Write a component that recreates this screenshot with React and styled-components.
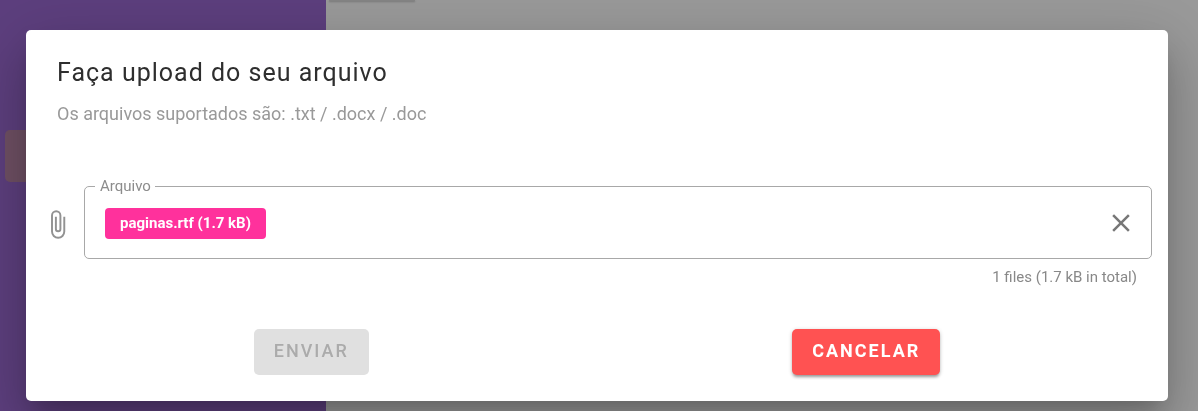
import React, { useState } from "react";
import styled, { createGlobalStyle } from "styled-components";

const GlobalStyle = createGlobalStyle`
  *, *::before, *::after { box-sizing: border-box; }
  body { margin: 0; font-family: Roboto, "Liberation Sans", sans-serif; }
`;

const Page = styled.div`
  display: flex;
  min-height: 100vh;
`;

const Sidebar = styled.nav`
  flex: 0 0 326px;
  padding: 130px 5px 0;
  background: #5d3f7e;
`;

const ActiveItem = styled.div`
  height: 52px;
  border-radius: 5px;
  background: #6f5064;
`;

const Main = styled.main`
  flex: 1;
  padding: 0 3px;
  background: #9a9a9a;
`;

const MainTab = styled.div`
  width: 86px;
  height: 1px;
  background: #858585;
  box-shadow: 0 1px 2px rgba(0, 0, 0, 0.3);
`;

const Overlay = styled.div`
  position: fixed;
  inset: 0;
  padding: 30px 30px 10px 26px;
`;

const Dialog = styled.section`
  display: flex;
  flex-direction: column;
  min-height: 100%;
  padding: 25px 16px 26px;
  border-radius: 5px;
  background: #fff;
  box-shadow:
    0 14px 20px -9px rgba(0, 0, 0, 0.2),
    0 31px 49px 4px rgba(0, 0, 0, 0.14),
    0 12px 60px 10px rgba(0, 0, 0, 0.12);
`;

const Heading = styled.header`
  padding: 0 15px;
`;

const Title = styled.h1`
  margin: 0;
  font-size: 25px;
  line-height: 36px;
  font-weight: 400;
  letter-spacing: 1px;
  color: #2e2e2e;
`;

const Subtitle = styled.p`
  margin: 9px 0 0;
  font-size: 18px;
  line-height: 28px;
  color: #999;
`;

const FieldRow = styled.div`
  display: flex;
  align-items: flex-start;
  margin-top: 49px;
`;

const ClipLabel = styled.label`
  display: flex;
  flex: 0 0 42px;
  padding-top: 32px;
  color: #929292;
  cursor: pointer;
`;

const FieldColumn = styled.div`
  flex: 1;
`;

const FileBox = styled.fieldset`
  display: flex;
  align-items: center;
  justify-content: space-between;
  min-width: 0;
  height: 82px;
  margin: 0;
  padding: 0 15px 7px 20px;
  border: 1px solid #a8a8a8;
  border-radius: 5px;
`;

const Legend = styled.legend`
  margin-left: -10px;
  padding: 0 4px 0 5px;
  font-size: 15px;
  line-height: 18px;
  color: #8c8c8c;
`;

const HiddenInput = styled.input`
  position: absolute;
  width: 1px;
  height: 1px;
  opacity: 0;
`;

const Chip = styled.span`
  padding: 0 15px;
  border-radius: 4px;
  background: #ff319c;
  font-size: 15px;
  line-height: 31px;
  font-weight: 700;
  color: #fff;
`;

const ClearButton = styled.button`
  display: flex;
  margin-left: auto;
  padding: 0;
  border: 0;
  background: none;
  color: #777;
  cursor: pointer;
`;

const Counter = styled.p`
  margin: 9px 15px 0;
  font-size: 15px;
  line-height: 18px;
  text-align: right;
  color: #888;
`;

const Actions = styled.footer`
  display: flex;
  justify-content: space-around;
  margin-top: auto;
`;

const Button = styled.button`
  height: 46px;
  padding: 0 20px 3px;
  border: 0;
  border-radius: 5px;
  background: ${(p) => (p.$danger ? "#ff5252" : "#e0e0e0")};
  box-shadow: ${(p) =>
    p.$danger ? "0 3px 3px -1px rgba(0, 0, 0, 0.3), 0 1px 4px rgba(0, 0, 0, 0.2)" : "none"};
  font-family: inherit;
  font-size: 18px;
  font-weight: ${(p) => (p.$danger ? 700 : 500)};
  letter-spacing: 2px;
  color: ${(p) => (p.$danger ? "#fff" : "#ababab")};
`;

const PaperclipIcon = () => (
  <svg width="31" height="31" viewBox="0 0 24 24" fill="currentColor" aria-hidden="true">
    <path d="M16.5,6V17.5A4,4 0 0,1 12.5,21.5A4,4 0 0,1 8.5,17.5V5A2.5,2.5 0 0,1 11,2.5A2.5,2.5 0 0,1 13.5,5V15.5A1,1 0 0,1 12.5,16.5A1,1 0 0,1 11.5,15.5V6H10V15.5A2.5,2.5 0 0,0 12.5,18A2.5,2.5 0 0,0 15,15.5V5A4,4 0 0,0 11,1A4,4 0 0,0 7,5V17.5A5.5,5.5 0 0,0 12.5,23A5.5,5.5 0 0,0 18,17.5V6H16.5Z" />
  </svg>
);

const CloseIcon = () => (
  <svg width="30" height="30" viewBox="0 0 24 24" fill="currentColor" aria-hidden="true">
    <path d="M19,6.41L17.59,5L12,10.59L6.41,5L5,6.41L10.59,12L5,17.59L6.41,19L12,13.41L17.59,19L19,17.59L13.41,12L19,6.41Z" />
  </svg>
);

export default function App() {
  const [file, setFile] = useState({ name: "paginas.rtf", kb: "1.7" });

  const pickFile = (event) => {
    const picked = event.target.files[0];
    if (picked) setFile({ name: picked.name, kb: (picked.size / 1000).toFixed(1) });
  };

  return (
    <>
      <GlobalStyle />
      <Page>
        <Sidebar>
          <ActiveItem />
        </Sidebar>
        <Main>
          <MainTab />
        </Main>
      </Page>
      <Overlay>
        <Dialog role="dialog" aria-modal="true" aria-labelledby="upload-title">
          <Heading>
            <Title id="upload-title">Faça upload do seu arquivo</Title>
            <Subtitle>Os arquivos suportados são: .txt / .docx / .doc</Subtitle>
          </Heading>
          <FieldRow>
            <ClipLabel htmlFor="file" aria-label="Arquivo">
              <PaperclipIcon />
            </ClipLabel>
            <FieldColumn>
              <FileBox>
                <Legend>Arquivo</Legend>
                <HiddenInput id="file" type="file" accept=".txt,.docx,.doc" onChange={pickFile} />
                {file && (
                  <Chip>
                    {`${file.name} (${file.kb} kB)`}
                  </Chip>
                )}
                <ClearButton type="button" aria-label="Limpar" onClick={() => setFile(null)}>
                  <CloseIcon />
                </ClearButton>
              </FileBox>
              <Counter>{file ? `1 files (${file.kb} kB in total)` : "0 files"}</Counter>
            </FieldColumn>
          </FieldRow>
          <Actions>
            <Button type="button" disabled>ENVIAR</Button>
            <Button type="button" $danger>CANCELAR</Button>
          </Actions>
        </Dialog>
      </Overlay>
    </>
  );
}
